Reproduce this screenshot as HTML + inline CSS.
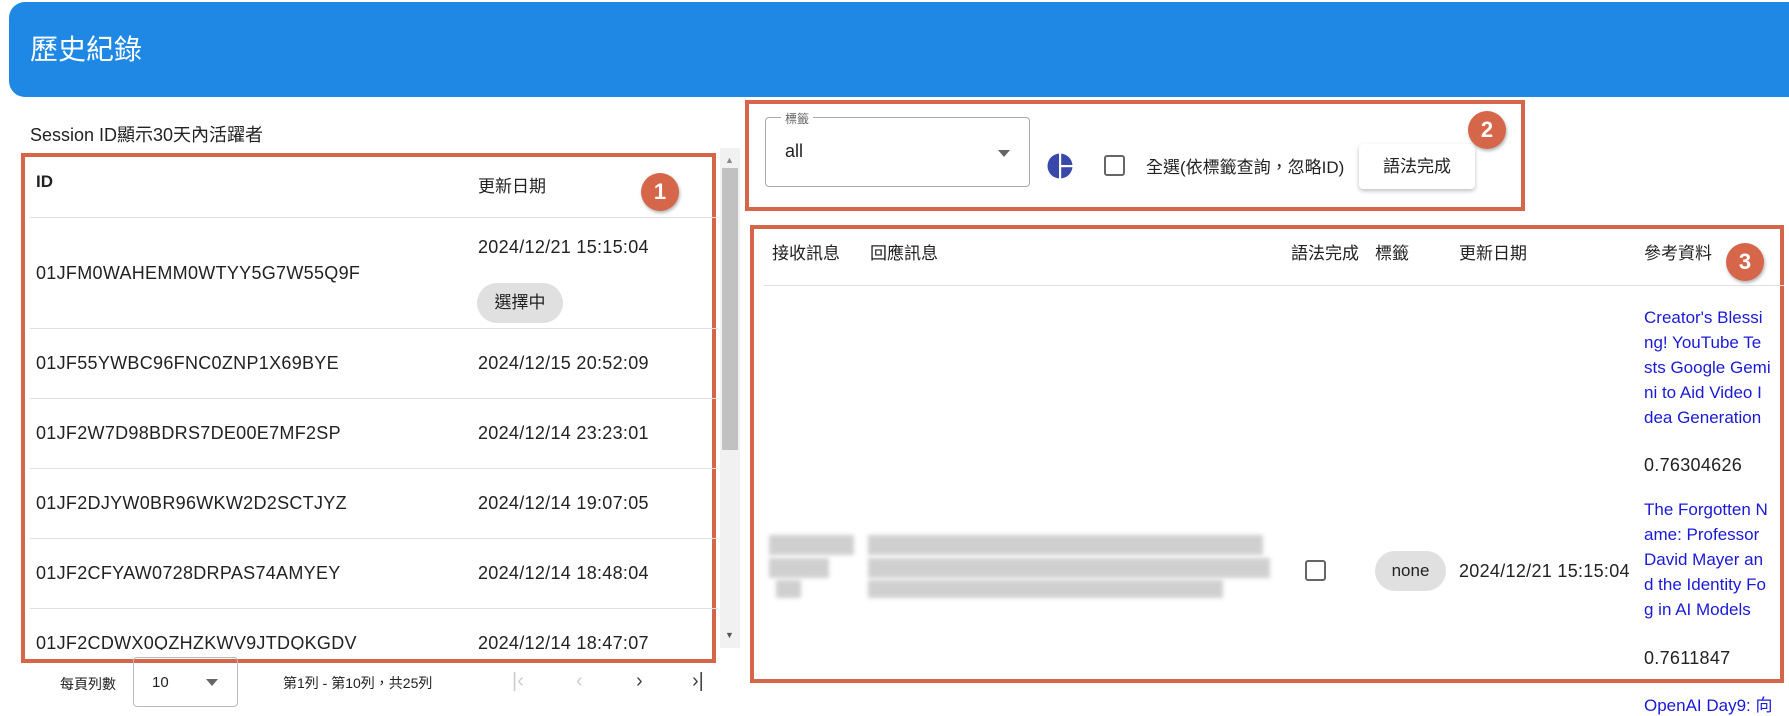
<!DOCTYPE html>
<html><head><meta charset="utf-8">
<style>
*{margin:0;padding:0;box-sizing:border-box}
body{width:1789px;height:713px;overflow:hidden;background:#fff;font-family:"Liberation Sans","Noto Sans CJK TC",sans-serif;color:#222;position:relative}
.a{position:absolute;white-space:nowrap}
.hdr{left:9px;top:2px;width:1800px;height:95px;background:#1f88e5;border-radius:16px}
.box{position:absolute;border:4px solid #d5664a}
.badge{position:absolute;width:38px;height:38px;border-radius:50%;background:#d5664a;color:#fff;font-weight:bold;font-size:22px;text-align:center;line-height:38px;box-shadow:1px 2px 3px rgba(0,0,0,.3)}
.t16{font-size:17px}
.d{font-size:18px;letter-spacing:.3px}
.line{position:absolute;height:1px;background:#e0e0e0}
.link{color:#1a1ad6;font-size:17px}
.blur{position:absolute;background:#bbb;filter:blur(2px);opacity:.7}
</style></head><body>
<div class="a hdr"></div>
<div class="a" style="left:30px;top:28px;font-size:28px;color:#fff">歷史紀錄</div>

<div class="a" style="left:30px;top:121px;font-size:18px">Session ID顯示30天內活躍者</div>

<div class="box" style="left:21px;top:153px;width:695px;height:510px"></div>
<div class="a t16" style="left:36px;top:172px;font-weight:bold">ID</div>
<div class="a t16" style="left:478px;top:172px">更新日期</div>
<div class="line" style="left:30px;top:217px;width:688px"></div>
<div class="a d" style="left:36px;top:263px">01JFM0WAHEMM0WTYY5G7W55Q9F</div>
<div class="a d" style="left:478px;top:237px">2024/12/21 15:15:04</div>
<div class="a t16" style="left:477px;top:283px;width:86px;height:40px;background:#e0e0e0;border-radius:20px;text-align:center;line-height:40px">選擇中</div>
<div class="line" style="left:30px;top:328px;width:688px"></div>
<div class="a d" style="left:36px;top:353px">01JF55YWBC96FNC0ZNP1X69BYE</div>
<div class="a d" style="left:478px;top:353px">2024/12/15 20:52:09</div>
<div class="line" style="left:30px;top:398px;width:688px"></div>
<div class="a d" style="left:36px;top:423px">01JF2W7D98BDRS7DE00E7MF2SP</div>
<div class="a d" style="left:478px;top:423px">2024/12/14 23:23:01</div>
<div class="line" style="left:30px;top:468px;width:688px"></div>
<div class="a d" style="left:36px;top:493px">01JF2DJYW0BR96WKW2D2SCTJYZ</div>
<div class="a d" style="left:478px;top:493px">2024/12/14 19:07:05</div>
<div class="line" style="left:30px;top:538px;width:688px"></div>
<div class="a d" style="left:36px;top:563px">01JF2CFYAW0728DRPAS74AMYEY</div>
<div class="a d" style="left:478px;top:563px">2024/12/14 18:48:04</div>
<div class="line" style="left:30px;top:608px;width:688px"></div>
<div class="a" style="left:30px;top:620px;width:690px;height:30px;overflow:hidden"><div class="a d" style="left:6px;top:13px">01JF2CDWX0QZHZKWV9JTDQKGDV</div><div class="a d" style="left:448px;top:13px">2024/12/14 18:47:07</div></div>
<div class="a" style="left:720px;top:148px;width:20px;height:500px;background:#f1f1f1"></div>
<div class="a" style="left:722px;top:168px;width:16px;height:282px;background:#c1c1c1"></div>
<div class="a" style="left:725px;top:155px;font-size:9px;color:#888">▲</div>
<div class="a" style="left:725px;top:630px;font-size:9px;color:#555">▼</div>
<div class="badge" style="left:641px;top:173px">1</div>

<div class="a" style="left:60px;top:674px;font-size:14px">每頁列數</div>
<div class="a" style="left:133px;top:657px;width:105px;height:50px;border:1px solid #bbb;border-radius:4px"></div>
<div class="a" style="left:152px;top:674px;font-size:15px">10</div>
<div class="a" style="left:206px;top:679px;width:0;height:0;border-left:6px solid transparent;border-right:6px solid transparent;border-top:7px solid #666"></div>
<div class="a" style="left:283px;top:673px;font-size:14px">第1列 - 第10列，共25列</div>
<div class="a" style="left:512px;top:670px;font-size:20px;color:#ccc">|‹</div>
<div class="a" style="left:576px;top:670px;font-size:20px;color:#ccc">‹</div>
<div class="a" style="left:636px;top:670px;font-size:20px;color:#444">›</div>
<div class="a" style="left:692px;top:670px;font-size:20px;color:#444">›|</div>

<div class="box" style="left:745px;top:100px;width:780px;height:111px"></div>
<div class="a" style="left:765px;top:117px;width:265px;height:70px;border:1px solid #aaa;border-radius:4px"></div>
<div class="a" style="left:781px;top:110px;font-size:12px;color:#666;background:#fff;padding:0 4px">標籤</div>
<div class="a" style="left:785px;top:141px;font-size:18px">all</div>
<div class="a" style="left:998px;top:150px;width:0;height:0;border-left:6px solid transparent;border-right:6px solid transparent;border-top:7px solid #666"></div>
<svg class="a" style="left:1047px;top:153px" width="26" height="26" viewBox="0 0 26 26"><circle cx="13" cy="13" r="12.5" fill="#3949ab"/><rect x="12" y="0" width="2.2" height="26" fill="#fff"/><rect x="13" y="12" width="13" height="2.2" fill="#fff"/></svg>
<div class="a" style="left:1104px;top:155px;width:21px;height:21px;border:2px solid #666;border-radius:3px"></div>
<div class="a" style="left:1146px;top:153px;font-size:17px">全選(依標籤查詢，忽略ID)</div>
<div class="a" style="left:1359px;top:144px;width:116px;height:45px;background:#fff;border-radius:4px;box-shadow:0 2px 4px rgba(0,0,0,.25);font-size:17px;text-align:center;line-height:45px">語法完成</div>
<div class="badge" style="left:1468px;top:111px">2</div>

<div class="box" style="left:750px;top:225px;width:1034px;height:458px"></div>
<div class="a t16" style="left:772px;top:239px">接收訊息</div>
<div class="a t16" style="left:870px;top:239px">回應訊息</div>
<div class="a t16" style="left:1291px;top:239px">語法完成</div>
<div class="a t16" style="left:1375px;top:239px">標籤</div>
<div class="a t16" style="left:1459px;top:239px">更新日期</div>
<div class="a t16" style="left:1644px;top:239px">參考資料</div>
<div class="line" style="left:764px;top:285px;width:1020px"></div>
<div class="badge" style="left:1726px;top:243px">3</div>
<div class="a link" style="left:1644px;top:305px;line-height:25px">Creator's Blessi<br>ng! YouTube Te<br>sts Google Gemi<br>ni to Aid Video I<br>dea Generation</div>
<div class="a d" style="left:1644px;top:455px">0.76304626</div>
<div class="a link" style="left:1644px;top:497px;line-height:25px">The Forgotten N<br>ame: Professor<br>David Mayer an<br>d the Identity Fo<br>g in AI Models</div>
<div class="a d" style="left:1644px;top:648px">0.7611847</div>
<div class="a link" style="left:1644px;top:691px">OpenAI Day9: 向</div>
<div class="blur" style="left:769px;top:535px;width:85px;height:20px"></div>
<div class="blur" style="left:769px;top:558px;width:60px;height:20px"></div>
<div class="blur" style="left:776px;top:580px;width:25px;height:18px"></div>
<div class="blur" style="left:868px;top:535px;width:395px;height:20px"></div>
<div class="blur" style="left:868px;top:558px;width:402px;height:20px"></div>
<div class="blur" style="left:868px;top:580px;width:355px;height:18px"></div>
<div class="a" style="left:1305px;top:560px;width:21px;height:21px;border:2px solid #666;border-radius:3px"></div>
<div class="a t16" style="left:1375px;top:551px;width:71px;height:40px;background:#e0e0e0;border-radius:20px;text-align:center;line-height:40px">none</div>
<div class="a d" style="left:1459px;top:561px">2024/12/21 15:15:04</div>
</body></html>
